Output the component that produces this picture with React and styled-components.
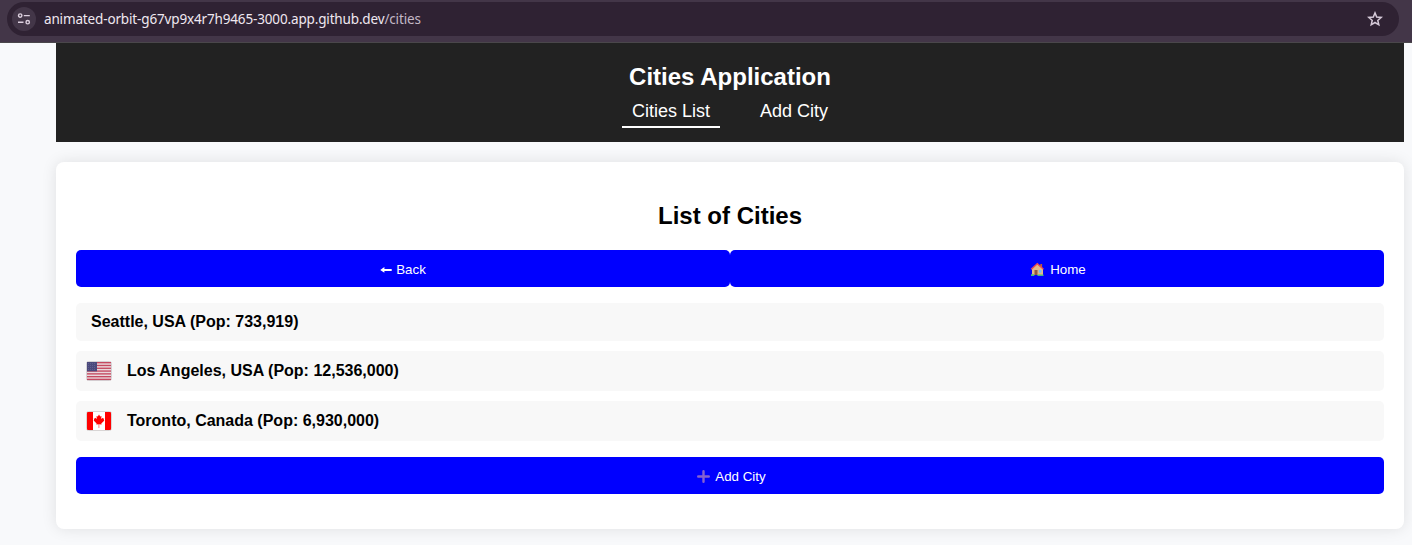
import React from "react";
import styled, { createGlobalStyle } from "styled-components";

const GlobalStyle = createGlobalStyle`
  *, *::before, *::after { box-sizing: border-box; }
  body {
    margin: 0;
    height: 545px;
    overflow: hidden;
    background: #f8f9fb;
    color: #000;
    font-family: Arial, "Liberation Sans", sans-serif;
  }
`;

const BrowserBar = styled.div`
  height: 43px;
  padding: 2px 13px 0 7px;
  background: #433648;
  border-bottom: 1px solid #4a474b;
`;

const AddressBox = styled.div`
  display: flex;
  align-items: center;
  height: 34px;
  padding: 0 16px 0 5px;
  border-radius: 17px;
  background: #2f2233;
`;

const SiteInfo = styled.span`
  display: flex;
  align-items: center;
  justify-content: center;
  width: 24px;
  height: 24px;
  margin-right: 8px;
  border-radius: 50%;
  background: #433648;
`;

const Url = styled.span`
  flex: 1;
  color: #efe8f0;
  font: 13.5px/20px "Noto Sans", "Open Sans", sans-serif;
  letter-spacing: -0.15px;
  white-space: nowrap;
`;

const UrlPath = styled.span`
  color: #c3b8c6;
`;

const Page = styled.div`
  display: flex;
  flex-direction: column;
  gap: 20px;
  margin: 0 8px 0 56px;
`;

const Header = styled.header`
  display: flex;
  flex-direction: column;
  align-items: center;
  height: 99px;
  padding-top: 20px;
  background: #222;
  color: #fff;
`;

const Title = styled.h1`
  margin: 0;
  font-size: 24px;
  line-height: 28px;
`;

const Nav = styled.nav`
  display: flex;
  gap: 30px;
  margin-top: 4px;
`;

const NavLink = styled.a`
  height: 33px;
  padding: 6px 10px 0;
  border-bottom: 2px solid ${(p) => (p.$active ? "#fff" : "transparent")};
  color: #fff;
  font-size: 18px;
  line-height: 21px;
  text-decoration: none;
`;

const Card = styled.main`
  height: 367px;
  padding: 40px 20px 0;
  border-radius: 8px;
  background: #fff;
  box-shadow: 0 0 15px rgba(0, 0, 0, 0.1);
`;

const Heading = styled.h2`
  margin: 0 0 20px;
  font-size: 24px;
  line-height: 28px;
  text-align: center;
`;

const ButtonRow = styled.div`
  display: grid;
  grid-template-columns: 1fr 1fr;
`;

const Button = styled.button`
  display: flex;
  align-items: center;
  justify-content: center;
  gap: ${(p) => p.$gap || 4}px;
  width: 100%;
  height: 37px;
  padding: 2px 0 0 ${(p) => p.$inset || 0}px;
  border: 0;
  border-radius: 5px;
  background: #00f;
  color: #fff;
  font: 13.333px/16px Arial, "Liberation Sans", sans-serif;
`;

const List = styled.ul`
  display: flex;
  flex-direction: column;
  gap: 10px;
  margin: 16px 0;
  padding: 0;
  list-style: none;
`;

const City = styled.li`
  display: flex;
  align-items: center;
  gap: ${(p) => p.$gap || 0}px;
  height: ${(p) => (p.$gap ? 40 : 38)}px;
  padding: 0 ${(p) => (p.$gap ? 10 : 15)}px;
  border-radius: 5px;
  background: #f8f8f8;
  font-size: 16px;
  font-weight: bold;
  line-height: 18px;
`;

const CityName = styled.span`
  padding-bottom: 1px;
`;

function TuneIcon() {
  return (
    <svg width="14" height="14" viewBox="0 0 14 14" fill="none" stroke="#ddd0df" strokeWidth="1.4">
      <circle cx="3.2" cy="3.6" r="1.7" />
      <path d="M6.8 3.6h6M1 10.2h5.5" />
      <circle cx="10.7" cy="10.2" r="1.7" />
    </svg>
  );
}

function StarIcon() {
  return (
    <svg width="16" height="16" viewBox="0 0 16 16" fill="none" stroke="#d6cad9" strokeWidth="1.5">
      <path d="M8 1.9 9.7 6l4.5.4-3.4 3 1 4.4L8 11.5l-3.8 2.3 1-4.4-3.4-3L6.3 6Z" />
    </svg>
  );
}

function ArrowIcon() {
  return (
    <svg width="12" height="10" viewBox="0 0 12 10" fill="#fff">
      <path d="M0.2 4.9 4.4 2v1.9h7.3v2H4.4v1.9Z" />
    </svg>
  );
}

function HouseIcon() {
  return (
    <svg width="15" height="15" viewBox="0 0 15 15">
      <path d="M10.3 2h1.8v3.5h-1.8Z" fill="#c45a35" />
      <path d="M2 7 7.3 2 13 7v6H2Z" fill="#e5b887" />
      <path d="M4.5 8h3v5h-3Z" fill="#8e593f" />
      <path d="M8.8 8h2.7v2.7H8.8Z" fill="#79bdf2" />
      <path d="m1.2 7.2 6.1-5.4 6.2 5.4" fill="none" stroke="#ec4b51" strokeWidth="1.4" />
      <path d="M1 12.2h3.3V14H1ZM7.5 12.6h6V14h-6Z" fill="#45b985" />
    </svg>
  );
}

function PlusIcon() {
  return (
    <svg width="13" height="13" viewBox="0 0 13 13" stroke="#8661cf" strokeWidth="2.4" strokeLinecap="round">
      <path d="M6.5 1.2v10.6M1.2 6.5h10.6" />
    </svg>
  );
}

function UsaFlag() {
  return (
    <svg width="26" height="20" viewBox="0 0 26 20">
      <rect x=".5" y=".5" width="25" height="19" rx="2" fill="#e9d9dc" stroke="#d5d3d6" />
      {[1, 3.8, 6.6, 9.4, 12.2, 15, 17.7].map((y) => (
        <rect key={y} x="1" y={y} width="24" height="1.35" fill="#c54a61" />
      ))}
      <path d="M1 1h10v9.3H1Z" fill="#4b4a7c" />
      <path d="M2 2.5h8M2 4.5h8M2 6.5h8M2 8.5h8" stroke="#68679a" strokeWidth=".7" strokeDasharray="1 1" />
    </svg>
  );
}

function CanadaFlag() {
  return (
    <svg width="26" height="20" viewBox="0 0 26 20">
      <rect x=".5" y=".5" width="25" height="19" rx="2" fill="#fff" stroke="#d8d5d5" />
      <path d="M2 1h5v18H2a1 1 0 0 1-1-1V2a1 1 0 0 1 1-1ZM19 1h5a1 1 0 0 1 1 1v16a1 1 0 0 1-1 1h-5Z" fill="#f00" />
      <path d="m13 3.5 1.2 2 1.3-.6-.4 3 1.5-1.2.3.9 1.3-.2-.5 1.6.7.6-3.1 2.8.3 1.2-2.4-.4V17h-.5v-3.8l-2.4.4.3-1.2-3-2.8.6-.6-.4-1.6 1.2.2.4-.9L10.9 8l-.4-3 1.3.6Z" fill="#f00" />
    </svg>
  );
}

export default function App() {
  return (
    <>
      <GlobalStyle />
      <BrowserBar>
        <AddressBox>
          <SiteInfo><TuneIcon /></SiteInfo>
          <Url>animated-orbit-g67vp9x4r7h9465-3000.app.github.dev<UrlPath>/cities</UrlPath></Url>
          <StarIcon />
        </AddressBox>
      </BrowserBar>
      <Page>
        <Header>
          <Title>Cities Application</Title>
          <Nav>
            <NavLink $active>Cities List</NavLink>
            <NavLink>Add City</NavLink>
          </Nav>
        </Header>
        <Card>
          <Heading>List of Cities</Heading>
          <ButtonRow>
            <Button><ArrowIcon />Back</Button>
            <Button $gap={5} $inset={2}><HouseIcon />Home</Button>
          </ButtonRow>
          <List>
            <City><CityName>Seattle, USA (Pop: 733,919)</CityName></City>
            <City $gap={15}><UsaFlag /><CityName>Los Angeles, USA (Pop: 12,536,000)</CityName></City>
            <City $gap={15}><CanadaFlag /><CityName>Toronto, Canada (Pop: 6,930,000)</CityName></City>
          </List>
          <Button $gap={5} $inset={3}><PlusIcon />Add City</Button>
        </Card>
      </Page>
    </>
  );
}
